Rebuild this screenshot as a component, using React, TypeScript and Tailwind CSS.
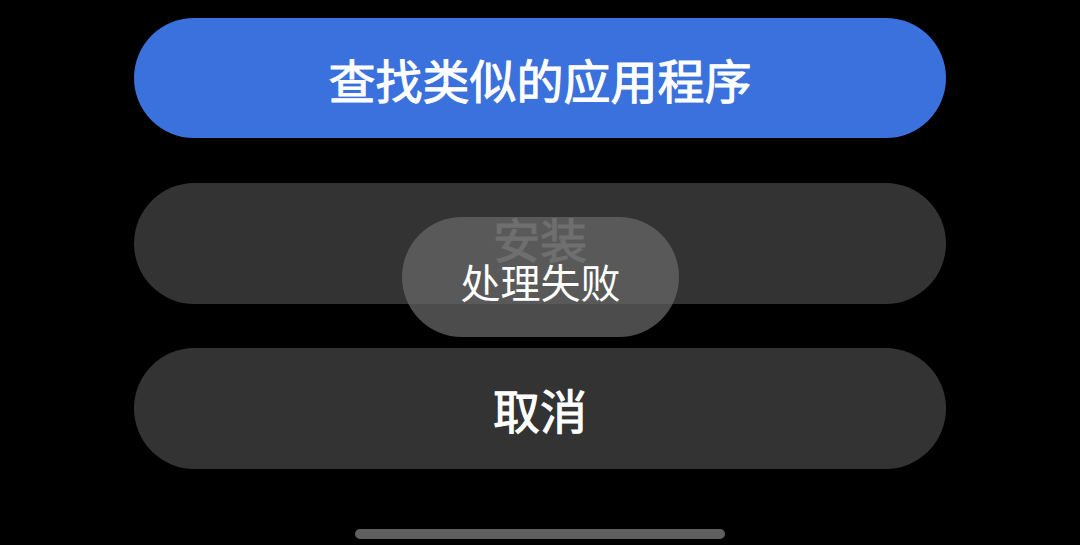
const cjk = "font-['Noto_Sans_CJK_SC','Noto_Sans',sans-serif]";

const App = () => {
  return (
    <div className={`w-[1080px] h-[545px] bg-black flex flex-col items-center pt-[18px] overflow-hidden ${cjk}`}>
      <button className="w-[812px] h-[120px] rounded-full bg-[#3a71dc] text-white text-[47px] leading-none [-webkit-text-stroke:1px_white]">
        查找类似的应用程序
      </button>

      <div className="relative mt-[45px] w-[812px] h-[121px]">
        <button className="w-full h-full rounded-full bg-[#333333] text-[#808080] text-[47px] leading-none pb-[12px] [-webkit-text-stroke:1px_#808080]">
          安装
        </button>
        <div className="absolute left-[268px] top-[34px] w-[277px] h-[120px] rounded-full bg-[rgba(104,104,104,0.73)] flex items-center justify-center text-white text-[40px] leading-none pt-[8px]">
          处理失败
        </div>
      </div>

      <button className="mt-[44px] w-[812px] h-[121px] rounded-full bg-[#333333] text-white text-[47px] leading-none [-webkit-text-stroke:1px_white]">
        取消
      </button>

      <div className="mt-[60px] w-[370px] h-[10px] rounded-full bg-[#5f5f5f]" />
    </div>
  );
};

export default App;
